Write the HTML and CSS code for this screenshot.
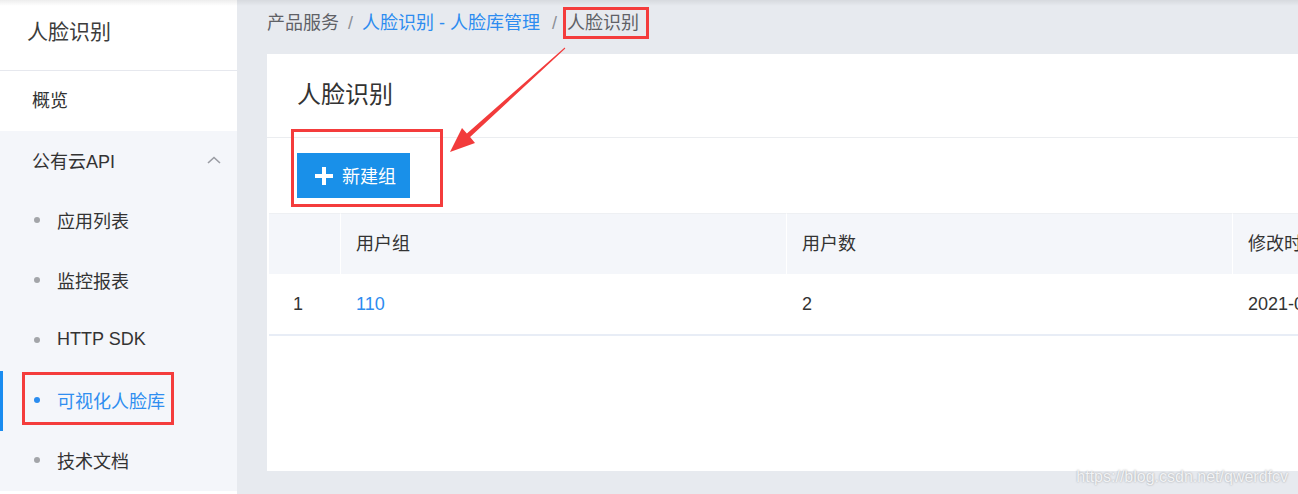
FILE: index.html
```html
<!DOCTYPE html>
<html lang="zh-CN">
<head>
<meta charset="utf-8">
<title>人脸识别</title>
<link rel="stylesheet" href="styles.css">
</head>
<body>
<div class="top-shadow"></div>
<aside class="sidebar">
  <div class="side-title">人脸识别</div>
  <div class="menu-item">概览</div>
  <div class="menu-group">
    <div class="group-head">
      <span>公有云API</span>
      <svg class="chevron" width="14" height="8" viewBox="0 0 14 8"><polyline points="1,7 7,1.5 13,7" fill="none" stroke="#9a9ca3" stroke-width="1.6"/></svg>
    </div>
    <div class="sub-item"><i class="dot"></i>应用列表</div>
    <div class="sub-item"><i class="dot"></i>监控报表</div>
    <div class="sub-item"><i class="dot"></i>HTTP SDK</div>
    <div class="sub-item active"><i class="dot"></i>可视化人脸库<span class="mark mark-side"></span></div>
    <div class="sub-item"><i class="dot"></i>技术文档</div>
  </div>
</aside>
<main class="main">
  <nav class="crumbs">
    <span class="crumb">产品服务</span><span class="sep">/</span><span class="crumb link">人脸识别 - 人脸库管理</span><span class="sep sep-2">/</span><span class="crumb current">人脸识别<span class="mark mark-crumb"></span></span>
  </nav>
  <section class="card">
    <div class="card-title">人脸识别</div>
    <div class="toolbar">
      <button class="btn-primary">
        <svg width="18" height="18" viewBox="0 0 18 18"><rect x="7" y="0" width="4" height="18" fill="#fff"/><rect x="0" y="7" width="18" height="4" fill="#fff"/></svg>
        <span>新建组</span>
      </button>
      <span class="mark mark-btn"></span>
    </div>
    <div class="table-wrap">
      <table class="table">
        <colgroup><col class="c-idx"><col class="c-wide"><col class="c-wide"><col class="c-wide"></colgroup>
        <thead>
          <tr><th></th><th>用户组</th><th>用户数</th><th>修改时间</th></tr>
        </thead>
        <tbody>
          <tr><td class="idx">1</td><td class="link">110</td><td>2</td><td>2021-03-18 10:20:35</td></tr>
        </tbody>
      </table>
    </div>
  </section>
</main>
<svg class="arrow" width="1298" height="494" viewBox="0 0 1298 494">
  <polygon fill="#f23b3b" points="565.3,48.5 564.7,47.5 466.9,133.4 462,128 450,152 475,143 470.1,137.1"/>
</svg>
<div class="watermark">https://blog.csdn.net/qwerdfcv</div>
</body>
</html>
```
FILE: styles.css
```css
* { box-sizing: border-box; }
html, body { margin: 0; padding: 0; }
body {
  width: 1298px;
  height: 494px;
  overflow: hidden;
  display: flex;
  background: #e7eaef;
  font-family: "Liberation Sans", "Noto Sans CJK SC", sans-serif;
  color: #333;
  position: relative;
}
.top-shadow {
  position: absolute;
  left: 0; top: 0; right: 0;
  height: 6px;
  background: linear-gradient(rgba(0,0,0,0.07), rgba(0,0,0,0));
  pointer-events: none;
  z-index: 5;
}
.sidebar {
  width: 237px;
  flex: none;
  background: #fff;
  display: flex;
  flex-direction: column;
}
.side-title {
  height: 71px;
  padding-left: 27px;
  line-height: 64px;
  font-size: 21px;
  color: #3c3c3c;
  border-bottom: 1px solid #e6e8ee;
}
.menu-item {
  height: 60px;
  line-height: 60px;
  padding-left: 32px;
  font-size: 18px;
  color: #333;
}
.menu-group {
  background: #f4f6fa;
}
.group-head {
  height: 60px;
  display: flex;
  align-items: center;
  justify-content: space-between;
  padding: 0 16px 3px 32px;
  font-size: 18px;
  color: #333;
}
.chevron { display: block; }
.sub-item {
  position: relative;
  height: 60px;
  display: flex;
  align-items: center;
  padding: 0 0 3px 34px;
  font-size: 18px;
  color: #333;
}
.dot {
  width: 6px;
  height: 6px;
  border-radius: 50%;
  background: #a3a5a9;
  margin-right: 17px;
}
.sub-item.active {
  color: #2f8ef0;
  border-left: 3px solid #1a8cf0;
  padding-left: 31px;
}
.sub-item.active .dot { background: #2a8cef; }
.mark {
  position: absolute;
  border: 3px solid #f43c3c;
  pointer-events: none;
}
.mark-side { left: 19px; top: 1px; width: 152px; height: 53px; }

.main {
  flex: 1;
  min-width: 0;
  padding: 0 0 23px 30px;
  display: flex;
  flex-direction: column;
}
.crumbs {
  height: 54px;
  display: flex;
  align-items: flex-start;
  font-size: 18px;
  color: #5f6166;
  white-space: nowrap;
}
.crumbs > span {
  display: block;
  line-height: 46px;
  height: 46px;
}
.crumb.link { color: #2d8cf0; }
.crumb.current { position: relative; color: #5f6166; }
.sep { padding: 0 9px; color: #8d9096; }
.sep-2 { padding: 0 10px 0 12px; }
.mark-crumb { left: -4px; top: 7px; width: 86px; height: 32px; }

.card {
  flex: 1;
  background: #fff;
  position: relative;
  overflow: hidden;
}
.card-title {
  height: 84px;
  line-height: 82px;
  padding-left: 30px;
  font-size: 24px;
  color: #333;
  border-bottom: 1px solid #ebedf0;
}
.toolbar {
  height: 75px;
  padding: 15px 0 0 30px;
}
.btn-primary {
  height: 45px;
  width: 113px;
  border: 0;
  border-radius: 0;
  background: #1990e9;
  color: #fff;
  font: inherit;
  font-size: 18px;
  display: flex;
  align-items: center;
  gap: 9px;
  padding: 0 0 2px 18px;
}
.btn-primary svg { display: block; margin-top: 2px; }
.mark-btn { left: 24px; top: 75px; width: 152px; height: 78px; }

.table-wrap { padding-left: 2px; }
.table {
  width: 1400px;
  table-layout: fixed;
  border-collapse: separate;
  border-spacing: 0;
  font-size: 18px;
}
.c-idx { width: 72px; }
.c-wide { width: 446px; }
.table th {
  height: 61px;
  background: #f4f6fa;
  text-align: left;
  font-weight: normal;
  color: #333;
  padding: 0 0 5px 15px;
  border-right: 1px solid #fff;
  border-top: 1px solid #eef0f3;
}
.table td {
  height: 62px;
  padding: 0 0 0 15px;
  color: #333;
  border-bottom: 2px solid #e8edf6;
  white-space: nowrap;
}
.table td.idx { padding-left: 24px; }
.table td.link { color: #2d8cf0; }

.arrow {
  position: absolute;
  left: 0; top: 0;
  pointer-events: none;
  z-index: 6;
}
.watermark {
  position: absolute;
  right: 10px;
  bottom: 8px;
  font-size: 16px;
  color: #f2f3f5;
  text-shadow: 0 0 2px rgba(0,0,0,0.35);
  pointer-events: none;
}
```
